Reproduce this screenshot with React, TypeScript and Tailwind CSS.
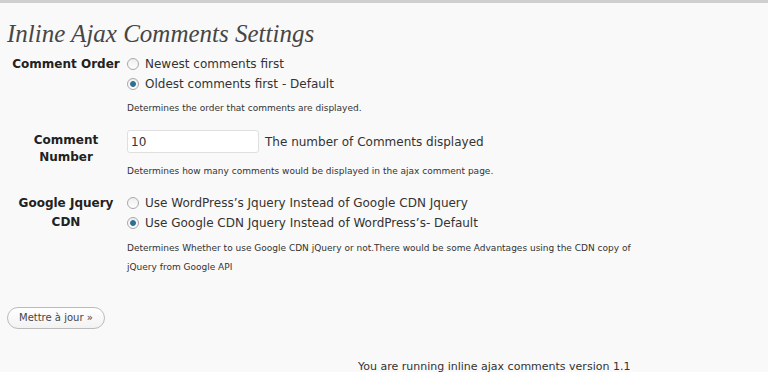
import React from 'react';

const Radio: React.FC<{ checked?: boolean; label: string }> = ({ checked, label }) => (
    <label className="flex items-center h-[20px]">
        <span className="w-[12px] h-[12px] rounded-full border border-[#a8a8a8] bg-gradient-to-b from-[#eeeeee] to-[#ffffff] flex items-center justify-center mr-[6px]">
            {checked && <span className="w-[6px] h-[6px] rounded-full bg-[#21759b] border border-[#3d6a86]" />}
        </span>
        <span className="text-[12px] text-[#333]">{label}</span>
    </label>
);

const App: React.FC = () => {
    return (
        <div className="w-[768px] h-[372px] overflow-hidden bg-[#f9f9f9] border-t-[3px] border-[#cfcfcf] font-['DejaVu_Sans',Verdana,sans-serif] text-[#333]">
            <h2 className="pl-[7px] pt-[16px] text-[25px] leading-[29px] italic text-[#464646] font-['Liberation_Serif',Georgia,serif]">
                Inline Ajax Comments Settings
            </h2>

            <div className="mt-[6px] pl-[10px]">
                {/* comment order */}
                <div className="flex">
                    <div className="w-[112px] whitespace-nowrap text-center text-[12px] font-bold text-[#222] leading-[19px] pt-[1px]">Comment Order</div>
                    <div className="pl-[5px]">
                        <Radio label="Newest comments first" />
                        <Radio checked label="Oldest comments first - Default" />
                        <p className="mt-[5px] text-[9px] leading-[19px]">Determines the order that comments are displayed.</p>
                    </div>
                </div>

                {/* comment number */}
                <div className="flex mt-[12px]">
                    <div className="w-[112px] text-center text-[12px] font-bold text-[#222] leading-[17px] pt-[2px]">
                        Comment<br />Number
                    </div>
                    <div className="pl-[5px]">
                        <div className="flex items-center">
                            <input
                                defaultValue="10"
                                className="w-[132px] h-[23px] bg-white border border-[#dfdfdf] rounded-[3px] px-[3px] text-[12px] text-[#333] outline-none"
                            />
                            <span className="ml-[6px] text-[12px]">The number of Comments displayed</span>
                        </div>
                        <p className="mt-[9px] text-[9px] leading-[19px]">Determines how many comments would be displayed in the ajax comment page.</p>
                    </div>
                </div>

                {/* jquery cdn */}
                <div className="flex mt-[12px]">
                    <div className="w-[112px] text-center text-[12px] font-bold text-[#222] leading-[19px] pt-[1px]">
                        Google Jquery<br />CDN
                    </div>
                    <div className="pl-[5px]">
                        <Radio label="Use WordPress’s Jquery Instead of Google CDN Jquery" />
                        <Radio checked label="Use Google CDN Jquery Instead of WordPress’s- Default" />
                        <p className="mt-[6px] w-[510px] text-[9px] leading-[19px]">
                            Determines Whether to use Google CDN jQuery or not.There would be some Advantages using the CDN copy of jQuery from Google API
                        </p>
                    </div>
                </div>
            </div>

            <div className="pl-[7px] mt-[27px]">
                <button className="h-[22px] px-[11px] rounded-full border border-[#bbbbbb] bg-gradient-to-b from-[#ffffff] to-[#f2f2f2] text-[10px] text-[#464646]">
                    Mettre à jour »
                </button>
            </div>

            <p className="mt-[31px] pl-[358px] text-[11px] leading-[14px] text-[#333]">You are running inline ajax comments version 1.1</p>
        </div>
    );
};

export default App;
